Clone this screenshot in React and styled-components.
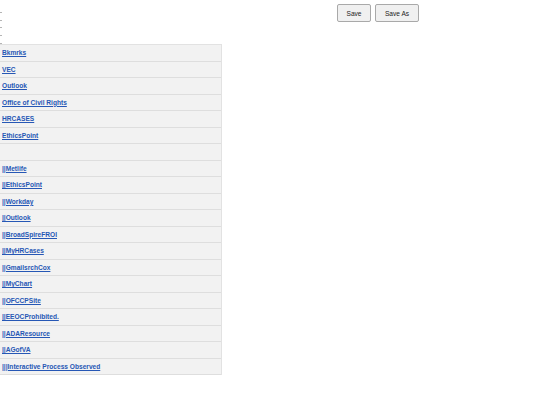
import React from "react";
import styled, { createGlobalStyle } from "styled-components";

const Global = createGlobalStyle`
  html, body { margin: 0; padding: 0; background: #ffffff; }
  body { font-family: "Liberation Sans", Arial, sans-serif; }
`;

const Page = styled.div`
  width: 540px;
  height: 405px;
  background: #fff;
`;

const Header = styled.div`
  display: flex;
  align-items: flex-start;
  height: 44px;
`;

const Marks = styled.div`
  display: flex;
  flex-direction: column;
  gap: 6.7px;
  padding-top: 12px;
  width: 3px;
`;

const Mark = styled.span`
  display: block;
  width: 2px;
  height: 1px;
  background: #b5b5b5;
`;

const Buttons = styled.div`
  display: flex;
  gap: 4px;
  margin-left: 334px;
  margin-top: 4px;
`;

const Button = styled.button`
  box-sizing: border-box;
  height: 18px;
  width: ${(p) => p.$w}px;
  padding: 0;
  font-family: "Liberation Sans", Arial, sans-serif;
  font-size: 6.6px;
  color: #222;
  background: #f0f0f0;
  border: 1px solid #a9a9a9;
  border-radius: 2px;
`;

const Table = styled.div`
  width: 222px;
  box-sizing: border-box;
  border-top: 1px solid #e2e2e2;
  border-right: 1px solid #e2e2e2;
  background: #f2f2f2;
`;

const Row = styled.div`
  box-sizing: border-box;
  height: 16.5px;
  display: flex;
  align-items: center;
  padding-left: 2px;
  border-bottom: 1px solid #dedede;
  background: #f2f2f2;
`;

const Link = styled.a`
  font-family: "Liberation Sans", Arial, sans-serif;
  font-size: 6.6px;
  font-weight: bold;
  color: #2657b5;
  text-decoration: underline;
  white-space: nowrap;
`;

const items = [
  "Bkmrks",
  "VEC",
  "Outlook",
  "Office of Civil Rights",
  "HRCASES",
  "EthicsPoint",
  "",
  "||Metlife",
  "||EthicsPoint",
  "||Workday",
  "||Outlook",
  "||BroadSpireFROI",
  "||MyHRCases",
  "||GmailsrchCox",
  "||MyChart",
  "||OFCCPSite",
  "||EEOCProhibited.",
  "||ADAResource",
  "||AGofVA",
  "|||Interactive Process Observed",
];

export default function App() {
  return (
    <Page>
      <Global />
      <Header>
        <Marks>
          <Mark />
          <Mark />
          <Mark />
          <Mark />
          <Mark />
        </Marks>
        <Buttons>
          <Button $w={34}>Save</Button>
          <Button $w={44}>Save As</Button>
        </Buttons>
      </Header>
      <Table>
        {items.map((t, i) => (
          <Row key={i}>{t ? <Link href="#">{t}</Link> : null}</Row>
        ))}
      </Table>
    </Page>
  );
}
